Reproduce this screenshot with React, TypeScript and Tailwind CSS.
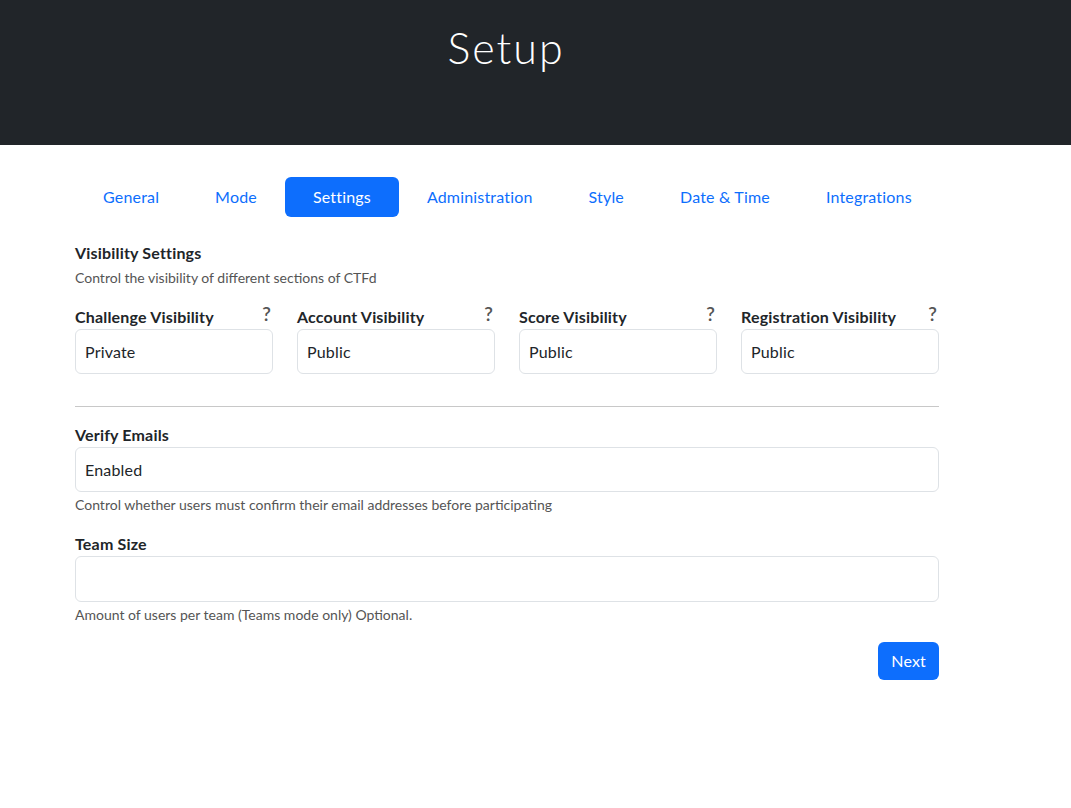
import React from 'react';

const tabs = ['General', 'Mode', 'Settings', 'Administration', 'Style', 'Date & Time', 'Integrations'];

const visibility = [
  { label: 'Challenge Visibility', value: 'Private' },
  { label: 'Account Visibility', value: 'Public' },
  { label: 'Score Visibility', value: 'Public' },
  { label: 'Registration Visibility', value: 'Public' },
];

const Help = () => (
  <span className="text-[19px] leading-none font-semibold text-[#555] -translate-y-[6px] pr-[2px]">?</span>
);

export default function App() {
  return (
    <div
      className="min-h-screen bg-white text-[#212529] tracking-[0.18px]"
      style={{ fontFamily: 'Lato, "Liberation Sans", sans-serif' }}
    >
      <div className="h-[145px] bg-[#212529]">
        <div className="ml-[75px] w-[864px] pt-[22px] text-center">
          <h1 className="text-[43px] leading-[52px] font-light tracking-[2px] pr-[2px] text-white">Setup</h1>
        </div>
      </div>

      <div className="ml-[75px] w-[864px] pt-[32px]">
        <div className="flex">
          {tabs.map((t) => (
            <div
              key={t}
              className={
                t === 'Settings'
                  ? 'shrink-0 whitespace-nowrap px-[28px] py-[8px] text-[16px] leading-[24px] rounded-[6px] bg-[#0d6efd] text-white'
                  : 'shrink-0 whitespace-nowrap px-[28px] py-[8px] text-[16px] leading-[24px] text-[#0d6efd]'
              }
            >
              {t}
            </div>
          ))}
        </div>

        <div className="mt-[24px]">
          <div className="text-[16px] leading-[24px] font-bold">Visibility Settings</div>
          <div className="mt-[2px] text-[14px] leading-[21px] tracking-normal text-[#555]">
            Control the visibility of different sections of CTFd
          </div>
        </div>

        <div className="mt-[17px] grid grid-cols-4 gap-[24px]">
          {visibility.map((v) => (
            <div key={v.label}>
              <div className="flex items-end justify-between">
                <span className="text-[16px] leading-[24px] font-bold">{v.label}</span>
                <Help />
              </div>
              <div className="h-[45px] flex items-center px-[9px] border border-[#dee2e6] rounded-[6px] text-[16px]">
                {v.value}
              </div>
            </div>
          ))}
        </div>

        <hr className="mt-[32px] border-t border-[#c8c8c8]" />

        <div className="mt-[16px]">
          <div className="text-[16px] leading-[24px] font-bold">Verify Emails</div>
          <div className="h-[45px] flex items-center px-[9px] border border-[#dee2e6] rounded-[6px] text-[16px]">
            Enabled
          </div>
          <div className="mt-[2px] text-[14px] leading-[21px] tracking-normal text-[#555]">
            Control whether users must confirm their email addresses before participating
          </div>
        </div>

        <div className="mt-[17px]">
          <div className="text-[16px] leading-[24px] font-bold">Team Size</div>
          <div className="h-[46px] border border-[#dee2e6] rounded-[6px]" />
          <div className="mt-[2px] text-[14px] leading-[21px] tracking-normal text-[#555]">
            Amount of users per team (Teams mode only) Optional.
          </div>
        </div>

        <div className="mt-[17px] flex justify-end">
          <button className="h-[38px] px-[13px] rounded-[6px] bg-[#0d6efd] text-white text-[16px]">Next</button>
        </div>
      </div>
    </div>
  );
}
